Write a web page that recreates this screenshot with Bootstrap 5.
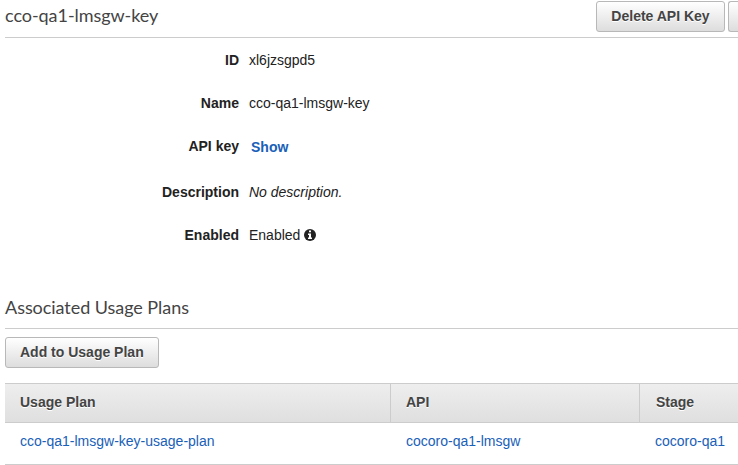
<!DOCTYPE html>
<html lang="en">
<head>
<meta charset="utf-8">
<title>API key</title>
<link href="https://cdn.jsdelivr.net/npm/bootstrap@5.3.0/dist/css/bootstrap.min.css" rel="stylesheet">
<style>
body{font-family:"Liberation Sans",Arial,sans-serif;font-size:14px;line-height:20px;color:#222;height:465px}
.page{padding-left:5px}
.bar{border-bottom:1px solid #ccc;color:#444}
.bar-key{height:38px;padding-top:1px}
.bar-key .title{padding-top:1px}
.bar-plans{height:35px;margin-top:26px}
.title{font-family:Lato,sans-serif;font-size:18px;line-height:26px;font-weight:400;margin:0;letter-spacing:-.05px}
.btn-aws{height:31px;padding:0 14px 1px;border:1px solid #b8b8b8;border-radius:3px;background:linear-gradient(#fff,#ddd);color:#444;font-size:14px;line-height:28px;font-weight:700;text-shadow:0 1px 0 #fff}
.btn-delete{width:129px;margin-right:3px}
.btn-edit{width:10px;padding:0;border-right:0;border-radius:3px 0 0 3px}
.details{margin:0;padding-top:12px}
.item{height:43px}
.item-key{height:46px}
.item dt{width:234px;margin-right:10px}
.item dd{margin:0}
a{color:#1960b8}
.item .show-link{margin:1px 0 0 2px}
.info{width:12px;height:12px;margin:4px 0 0 4px}
.plans{width:733px;margin:15px 0 0;table-layout:fixed;border-collapse:separate;border-spacing:0}
.plans th{height:40px;padding:0 15px 2px;border-top:1px solid #ccc;border-bottom:1px solid #ccc;background:linear-gradient(#eee,#dfdfdf);color:#444;text-shadow:0 1px 0 #fff}
.plans th+th{border-left:1px solid #ccc}
.plans th:last-child{padding-left:16px}
.plans td{height:42px;padding:0 0 6px 15px;border-bottom:1px solid #ccc}
.plans td+td{padding-left:16px}
.c1{width:385px}.c2{width:249px}
</style>
</head>
<body class="bg-white overflow-hidden">
<main class="page">
  <header class="bar bar-key d-flex justify-content-between align-items-start">
    <h1 class="title">cco-qa1-lmsgw-key</h1>
    <div class="d-flex flex-shrink-0">
      <button class="btn btn-aws btn-delete text-nowrap" type="button">Delete API Key</button>
      <button class="btn btn-aws btn-edit" type="button" aria-label="More"></button>
    </div>
  </header>
  <dl class="details">
    <div class="item d-flex"><dt class="text-end">ID</dt><dd>xl6jzsgpd5</dd></div>
    <div class="item d-flex"><dt class="text-end">Name</dt><dd>cco-qa1-lmsgw-key</dd></div>
    <div class="item item-key d-flex"><dt class="text-end">API key</dt><dd class="show-link"><a class="fw-bold text-decoration-none" href="#">Show</a></dd></div>
    <div class="item d-flex"><dt class="text-end">Description</dt><dd class="fst-italic">No description.</dd></div>
    <div class="item d-flex"><dt class="text-end">Enabled</dt><dd class="d-flex">Enabled
      <svg class="info" viewBox="0 0 12 12"><circle cx="6" cy="6" r="6" fill="#222"/><path d="M5 1.5h2v1.7H5zM4 4.6h3v4h1V10H4V8.600h1V6H4z" fill="#fff"/></svg></dd></div>
  </dl>
  <header class="bar bar-plans"><h2 class="title">Associated Usage Plans</h2></header>
  <button class="btn btn-aws mt-2 d-block" type="button">Add to Usage Plan</button>
  <table class="plans">
    <colgroup><col class="c1"><col class="c2"><col></colgroup>
    <thead><tr><th>Usage Plan</th><th>API</th><th>Stage</th></tr></thead>
    <tbody><tr>
      <td><a class="text-decoration-none" href="#">cco-qa1-lmsgw-key-usage-plan</a></td>
      <td><a class="text-decoration-none" href="#">cocoro-qa1-lmsgw</a></td>
      <td><a class="text-decoration-none" href="#">cocoro-qa1</a></td>
    </tr></tbody>
  </table>
</main>
</body>
</html>
